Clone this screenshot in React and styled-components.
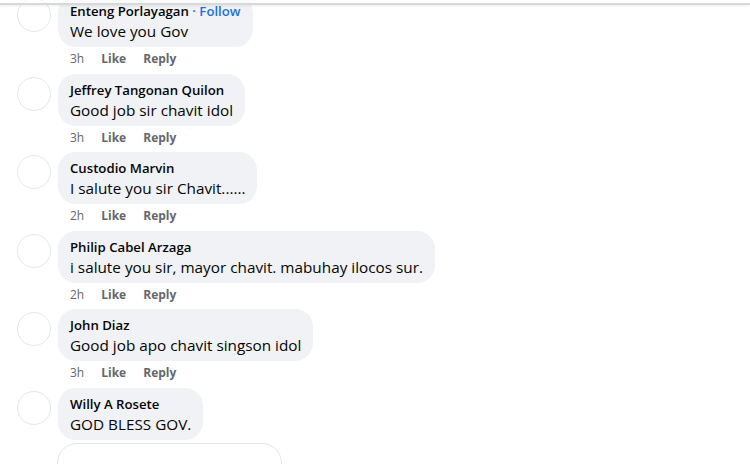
import React from "react";
import styled, { createGlobalStyle } from "styled-components";

const GlobalStyle = createGlobalStyle`
  html, body {
    margin: 0;
    padding: 0;
    background: #ffffff;
    overflow: hidden;
  }
  body {
    font-family: "Open Sans", "Noto Sans", "Liberation Sans", sans-serif;
    color: #050505;
  }
`;

const TopEdge = styled.div`
  position: fixed;
  top: 0;
  left: 0;
  right: 0;
  height: 3px;
  background: rgba(255, 255, 255, 0.6);
  border-bottom: 2px solid #d9d9d9;
  box-shadow: 0 1px 3px rgba(0, 0, 0, 0.08);
  z-index: 2;
`;

const Page = styled.div`
  width: 750px;
  height: 464px;
  overflow: hidden;
`;

const List = styled.div`
  display: flex;
  flex-direction: column;
  padding-left: 17px;
  margin-top: -5px;
`;

const Comment = styled.div`
  display: flex;
  align-items: flex-start;
  gap: 7px;
`;

const Avatar = styled.div`
  flex: none;
  width: 32px;
  height: 32px;
  margin-top: 3px;
  border-radius: 50%;
  border: 1px solid #e6e7ea;
  background: #ffffff;
`;

const Body = styled.div`
  display: flex;
  flex-direction: column;
  align-items: flex-start;
`;

const Bubble = styled.div`
  box-sizing: border-box;
  height: 52px;
  padding: 7px 12px 5px 12px;
  border-radius: 18px;
  background: #f0f2f5;
`;

const Name = styled.div`
  font-size: 13.2px;
  font-weight: 600;
  line-height: 18px;
  color: #050505;
  white-space: nowrap;
`;

const Follow = styled.span`
  color: #216fdb;
`;

const Text = styled.div`
  font-size: 15.3px;
  line-height: 22px;
  color: #050505;
  white-space: nowrap;
`;

const Meta = styled.div`
  box-sizing: border-box;
  height: 26.5px;
  display: flex;
  gap: 17px;
  padding: 3px 0 0 12px;
  font-size: 12px;
  line-height: 18px;
  color: #65676b;
`;

const MetaAction = styled.span`
  font-weight: 700;
`;

const InputBox = styled.div`
  width: 223px;
  height: 40px;
  margin: 3px 0 0 40px;
  border: 1px solid #e4e6e9;
  border-radius: 20px;
  background: #ffffff;
`;

const comments = [
  { name: "Enteng Porlayagan", follow: true, text: "We love you Gov", time: "3h" },
  { name: "Jeffrey Tangonan Quilon", text: "Good job sir chavit idol", time: "3h" },
  { name: "Custodio Marvin", text: "I salute you sir Chavit......", time: "2h" },
  { name: "Philip Cabel Arzaga", text: "i salute you sir, mayor chavit. mabuhay ilocos sur.", time: "2h" },
  { name: "John Diaz", text: "Good job apo chavit singson idol", time: "3h" },
  { name: "Willy A Rosete", text: "GOD BLESS GOV.", time: null },
];

export default function App() {
  return (
    <Page>
      <GlobalStyle />
      <TopEdge />
      <List>
        {comments.map((c) => (
          <Comment key={c.name}>
            <Avatar />
            <Body>
              <Bubble>
                <Name>
                  {c.name}
                  {c.follow && <Follow> · Follow</Follow>}
                </Name>
                <Text>{c.text}</Text>
              </Bubble>
              {c.time && (
                <Meta>
                  <span>{c.time}</span>
                  <MetaAction>Like</MetaAction>
                  <MetaAction>Reply</MetaAction>
                </Meta>
              )}
            </Body>
          </Comment>
        ))}
        <InputBox />
      </List>
    </Page>
  );
}
